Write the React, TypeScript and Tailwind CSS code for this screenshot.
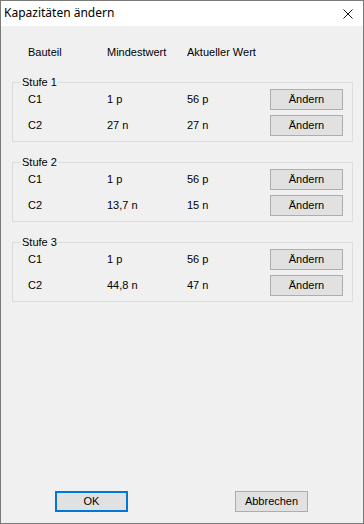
const groups = [
  { name: 'Stufe 1', rows: [['C1', '1 p', '56 p'], ['C2', '27 n', '27 n']] },
  { name: 'Stufe 2', rows: [['C1', '1 p', '56 p'], ['C2', '13,7 n', '15 n']] },
  { name: 'Stufe 3', rows: [['C1', '1 p', '56 p'], ['C2', '44,8 n', '47 n']] },
];

function WinButton({ label, primary }: { label: string; primary?: boolean }) {
  return (
    <button
      className={
        primary
          ? 'w-[73px] h-[21px] bg-[#e1e1e1] border-2 border-[#0078d7] text-[11px] leading-[13px] text-black'
          : 'w-[73px] h-[21px] bg-[#e1e1e1] border border-[#adadad] text-[11px] leading-[13px] text-black'
      }
    >
      {label}
    </button>
  );
}

function App() {
  return (
    <div className="w-[364px] h-[524px] border border-[#7a7a7a] bg-[#f0f0f0] flex flex-col font-['Liberation_Sans',Arial,sans-serif] text-black">
      <div className="h-[25px] bg-white flex items-center justify-between pl-[3px] pr-[10px] shrink-0">
        <span className="text-[12px] font-['Noto_Sans',sans-serif] leading-[16px] -mt-[1px]">Kapazitäten ändern</span>
        <svg width="10" height="10" viewBox="0 0 10 10" className="mt-[1px]">
          <path d="M0.5 0.5 L9.5 9.5 M9.5 0.5 L0.5 9.5" stroke="#111" strokeWidth="1" />
        </svg>
      </div>

      <div className="flex-1 flex flex-col text-[11px] leading-[13px]">
        <div className="flex pt-[20px] pl-[27px]">
          <span className="w-[79px]">Bauteil</span>
          <span className="w-[80px]">Mindestwert</span>
          <span>Aktueller Wert</span>
        </div>

        <div className="flex flex-col gap-[20px] mt-[23px] ml-[11px] w-[341px]">
          {groups.map((g) => (
            <div key={g.name} className="relative border border-[#dcdcdc] pt-[6px] pb-[5px] flex flex-col gap-[5px]">
              <span className="absolute -top-[7px] left-[8px] px-[1px] bg-[#f0f0f0]">{g.name}</span>
              {g.rows.map((r) => (
                <div key={r[0]} className="flex items-center h-[21px] pl-[15px]">
                  <span className="w-[79px]">{r[0]}</span>
                  <span className="w-[80px]">{r[1]}</span>
                  <span className="w-[83px]">{r[2]}</span>
                  <WinButton label="Ändern" />
                </div>
              ))}
            </div>
          ))}
        </div>

        <div className="mt-auto mb-[11px] flex pl-[54px] gap-[107px]">
          <WinButton label="OK" primary />
          <WinButton label="Abbrechen" />
        </div>
      </div>
    </div>
  );
}

export default App;
